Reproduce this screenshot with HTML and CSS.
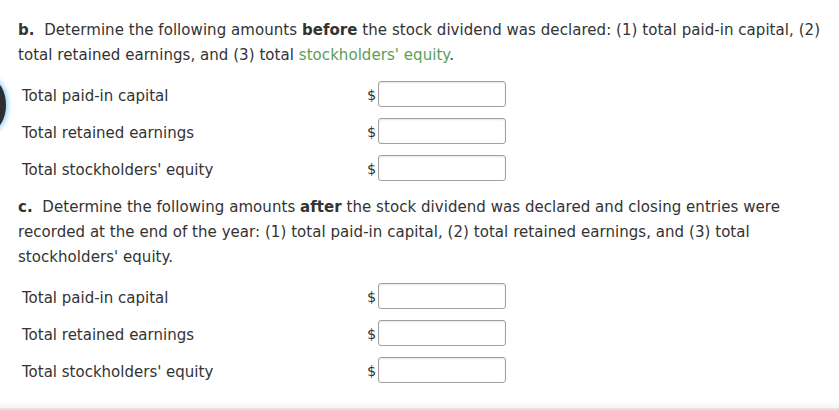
FILE: index.html
```html
<!DOCTYPE html>
<html>
<head>
<meta charset="utf-8">
<link rel="stylesheet" href="styles.css">
</head>
<body>
<div class="page">
  <div class="bubble"></div>
  <section class="part">
    <p class="prompt"><b>b.</b>&nbsp; Determine the following amounts <b>before</b> the stock dividend was declared: (1) total paid-in capital, (2) total retained earnings, and (3) total <span class="term">stockholders' equity</span>.</p>
    <div class="rows">
      <div class="row"><span class="label">Total paid-in capital</span><span class="cur">$</span><input class="amt" type="text"></div>
      <div class="row"><span class="label">Total retained earnings</span><span class="cur">$</span><input class="amt" type="text"></div>
      <div class="row"><span class="label">Total stockholders' equity</span><span class="cur">$</span><input class="amt" type="text"></div>
    </div>
  </section>
  <section class="part">
    <p class="prompt"><b>c.</b>&nbsp; Determine the following amounts <b>after</b> the stock dividend was declared and closing entries were recorded at the end of the year: (1) total paid-in capital, (2) total retained earnings, and (3) total stockholders' equity.</p>
    <div class="rows">
      <div class="row"><span class="label">Total paid-in capital</span><span class="cur">$</span><input class="amt" type="text"></div>
      <div class="row"><span class="label">Total retained earnings</span><span class="cur">$</span><input class="amt" type="text"></div>
      <div class="row"><span class="label">Total stockholders' equity</span><span class="cur">$</span><input class="amt" type="text"></div>
    </div>
  </section>
  <div class="foot"></div>
</div>
</body>
</html>
```
FILE: styles.css
```css
html, body {
  margin: 0;
  padding: 0;
  background: #fff;
}
body {
  font-family: "DejaVu Sans", Verdana, sans-serif;
  font-size: 15px;
  color: #333;
  overflow: hidden;
}
.page {
  position: relative;
  width: 839px;
  height: 410px;
  box-sizing: border-box;
  padding: 18px 16px 0 18px;
  display: flex;
  flex-direction: column;
}
.bubble {
  position: absolute;
  left: -24px;
  top: 80px;
  width: 30px;
  height: 50px;
  border-radius: 50%;
  background: #2f2f2f;
  box-shadow: 0 0 5px 2px #8fd3ff;
}
.part {
  display: flex;
  flex-direction: column;
}
.prompt {
  margin: 0;
  line-height: 25px;
  letter-spacing: 0.05px;
}
.prompt b {
  color: #333;
}
.term {
  color: #5a9e5a;
}
.rows {
  display: flex;
  flex-direction: column;
  gap: 11px;
  padding: 13px 0 14px 4px;
}
.row {
  display: flex;
  align-items: center;
  height: 26px;
}
.label {
  width: 345px;
  font-size: 15px;
  padding-top: 3px;
}
.cur {
  width: 11px;
  font-size: 14.5px;
  padding-top: 2px;
}
.amt {
  box-sizing: border-box;
  width: 128px;
  height: 26px;
  margin: 0;
  border: 1px solid #a0a0a0;
  border-radius: 3px;
  box-shadow: inset 0 1px 2px rgba(0,0,0,0.1);
  background: #fff;
  font: inherit;
}
.foot {
  margin-top: auto;
  height: 8px;
  margin-left: -18px;
  margin-right: -16px;
  background: linear-gradient(#fff, #f3f3f3);
  border-bottom: 2px solid #e2e2e2;
}
```
